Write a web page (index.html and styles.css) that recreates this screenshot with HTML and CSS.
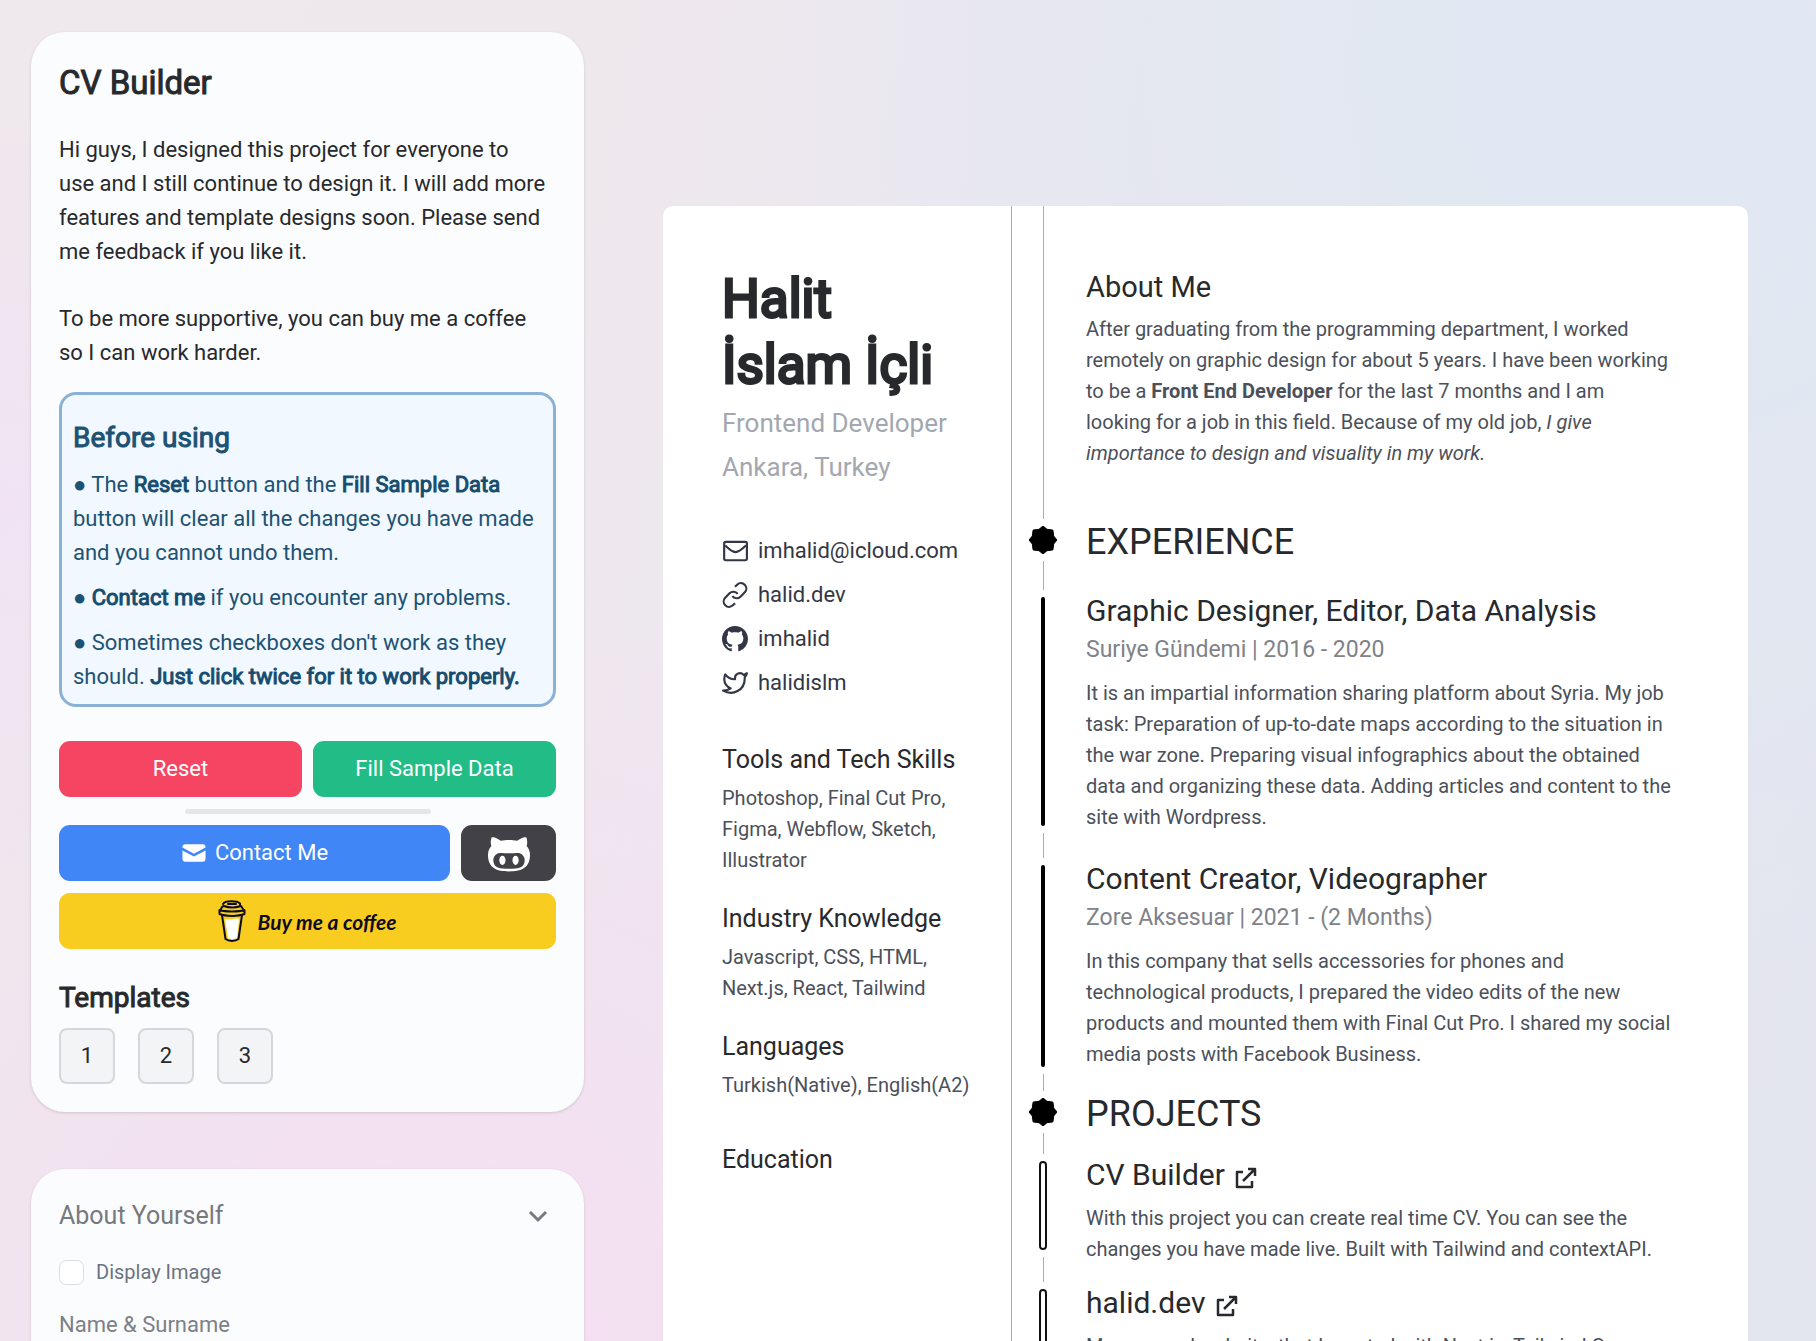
FILE: index.html
```html
<!DOCTYPE html>
<html lang="en">
<head>
<meta charset="utf-8">
<title>CV Builder</title>
<link rel="stylesheet" href="styles.css">
</head>
<body>
<div class="app">
  <aside class="sidebar">
    <section class="panel">
      <h1 class="panel-title">CV Builder</h1>
      <p class="intro">Hi guys, I designed this project for everyone to use and I still continue to design it. I will add more features and template designs soon. Please send me feedback if you like it.</p>
      <p class="intro">To be more supportive, you can buy me a coffee so I can work harder.</p>
      <div class="notice">
        <h2 class="notice-title">Before using</h2>
        <p>● The <b>Reset</b> button and the <b>Fill Sample Data</b> button will clear all the changes you have made and you cannot undo them.</p>
        <p>● <b>Contact me</b> if you encounter any problems.</p>
        <p>● Sometimes checkboxes don't work as they should. <b>Just click twice for it to work properly.</b></p>
      </div>
      <div class="row">
        <button class="btn btn-reset" type="button">Reset</button>
        <button class="btn btn-fill" type="button">Fill Sample Data</button>
      </div>
      <hr class="divider">
      <div class="row">
        <a class="btn btn-contact" href="#contact">
          <svg width="26" height="26" viewBox="0 0 18 18" fill="currentColor"><path d="M1 5a2 2 0 0 1 2-2h12a2 2 0 0 1 2 2v.2L9 9.500 1 5.200z"/><path d="M1 7.300V13a2 2 0 0 0 2 2h12a2 2 0 0 0 2-2V7.300l-8 4.200z"/></svg>
          Contact Me</a>
        <a class="btn btn-github" href="#github" aria-label="GitHub">
          <svg width="42" height="42" viewBox="0 0 16 16" fill="currentColor"><path fill-rule="evenodd" d="M14.7 5.34c.13-.32.55-1.59-.13-3.31 0 0-1.05-.33-3.44 1.3-1-.28-2.07-.32-3.13-.32s-2.13.04-3.13.32c-2.39-1.64-3.44-1.3-3.44-1.3-.68 1.72-.26 2.99-.13 3.31C.49 6.21 0 7.33 0 8.69 0 13.84 3.33 15 7.98 15S16 13.84 16 8.69c0-1.36-.49-2.48-1.3-3.35zM8 14.02c-3.3 0-5.98-.15-5.98-3.35 0-.76.38-1.48 1.02-2.07 1.07-.98 2.9-.46 4.96-.46 2.07 0 3.88-.52 4.96.46.65.59 1.02 1.3 1.02 2.07 0 3.19-2.68 3.35-5.98 3.35zM5.49 9.01c-.66 0-1.2.8-1.2 1.78s.54 1.79 1.2 1.79c.66 0 1.2-.8 1.2-1.79s-.54-1.78-1.2-1.78zm5.02 0c-.66 0-1.2.79-1.2 1.78s.54 1.79 1.2 1.79c.66 0 1.2-.8 1.2-1.79s-.53-1.78-1.2-1.78z"/></svg>
        </a>
      </div>
      <a class="btn btn-coffee" href="#coffee">
        <svg width="28" height="42" viewBox="0 0 28 42" fill="none" stroke="#0d0c22" stroke-width="2" stroke-linejoin="round" stroke-linecap="round"><path d="M7 19l3 19c2 1.500 7 1.500 9 0l2-19c-4-2-9 2-14 0z" fill="#fff" stroke="none"/><path d="M4 15l3.500 24c3 2.500 10 2.500 13 0L24 15"/><path d="M1.500 10c6 2 19 2 25 0v4c-6 2.500-19 2.500-25 0z"/><path d="M3 9c1-3 2-3 3-3 5 2 11 2 17 0l2 3M5 4c2-3.500 14-3.500 17-.5v2.500"/><path d="M10 4h8"/></svg>
        <span>Buy me a coffee</span>
      </a>
      <h2 class="templates-title">Templates</h2>
      <div class="templates">
        <button class="template" type="button">1</button>
        <button class="template" type="button">2</button>
        <button class="template" type="button">3</button>
      </div>
    </section>
    <section class="panel panel-form">
      <button class="accordion" type="button">About Yourself
        <svg width="22" height="22" viewBox="0 0 22 22" fill="none" stroke="currentColor" stroke-width="3"><path d="M3 7l8 8 8-8"/></svg>
      </button>
      <label class="check"><input type="checkbox"> Display Image</label>
      <label class="field">Name &amp; Surname<input type="text"></label>
    </section>
  </aside>

  <main class="stage">
    <article class="cv">
      <div class="cv-side">
        <h1 class="cv-name">Halit<br>İslam İçli</h1>
        <p class="cv-role">Frontend Developer</p>
        <p class="cv-role">Ankara, Turkey</p>
        <ul class="contacts">
          <li><svg class="icon" viewBox="0 0 24 24" fill="none" stroke="currentColor" stroke-width="2" stroke-linejoin="round"><rect x="2" y="3.500" width="21" height="17" rx="1.500"/><path d="M3 7c3 3 6 6 9.500 6S19 10 22 7"/></svg><a href="#mail">imhalid@icloud.com</a></li>
          <li><svg class="icon" viewBox="0 0 24 24" fill="none" stroke="currentColor" stroke-width="2"><path d="M9.500 13a5 5 0 0 0 7.540.540l4-4a5 5 0 0 0-7.070-7.070l-2 2"/><path d="M14.500 11a5 5 0 0 0-7.540-.540l-4 4a5 5 0 0 0 7.070 7.070l2-2"/></svg><a href="#site">halid.dev</a></li>
          <li><svg class="icon" viewBox="0 0 16 16" fill="currentColor"><path d="M8 0C3.580 0 0 3.580 0 8c0 3.540 2.290 6.530 5.470 7.590.4.070.55-.17.55-.38 0-.19-.01-.82-.01-1.490-2.010.37-2.530-.49-2.690-.94-.09-.23-.48-.94-.82-1.130-.28-.15-.68-.52-.01-.53.63-.01 1.080.58 1.230.82.72 1.210 1.870.87 2.330.66.07-.52.28-.87.51-1.070-1.780-.2-3.640-.89-3.640-3.950 0-.87.31-1.590.82-2.150-.08-.2-.36-1.020.08-2.120 0 0 .67-.21 2.200.82.64-.18 1.320-.27 2-.27s1.360.09 2 .27c1.530-1.040 2.200-.82 2.200-.82.44 1.100.16 1.920.08 2.120.51.56.82 1.270.82 2.150 0 3.070-1.870 3.750-3.650 3.950.29.25.54.73.54 1.480 0 1.070-.01 1.930-.01 2.200 0 .21.15.46.55.38A8.010 8.010 0 0 0 16 8c0-4.420-3.580-8-8-8z"/></svg><a href="#gh">imhalid</a></li>
          <li><svg class="icon" viewBox="0 0 24 24" fill="none" stroke="currentColor" stroke-width="2" stroke-linejoin="round"><path d="M23 3a10.900 10.900 0 0 1-3.140 1.530 4.480 4.480 0 0 0-7.860 3v1A10.660 10.660 0 0 1 3 4s-4 9 5 13a11.640 11.640 0 0 1-7 2c9 5 20 0 20-11.500a4.500 4.500 0 0 0-.08-.83A7.720 7.720 0 0 0 23 3z"/></svg><a href="#tw">halidislm</a></li>
        </ul>
        <section class="skill"><h2>Tools and Tech Skills</h2><p>Photoshop, Final Cut Pro, Figma, Webflow, Sketch, Illustrator</p></section>
        <section class="skill"><h2>Industry Knowledge</h2><p>Javascript, CSS, HTML, Next.js, React, Tailwind</p></section>
        <section class="skill"><h2>Languages</h2><p>Turkish(Native), English(A2)</p></section>
        <section class="skill skill-last"><h2>Education</h2></section>
      </div>

      <div class="cv-main">
        <section class="entry">
          <div class="rail"><i class="line"></i></div>
          <div class="about">
            <h2 class="entry-about">About Me</h2>
            <p class="copy">After graduating from the programming department, I worked remotely on graphic design for about 5 years. I have been working to be a <b>Front End Developer</b> for the last 7 months and I am looking for a job in this field. Because of my old job, <i>I give importance to design and visuality in my work.</i></p>
          </div>
        </section>
        <div class="entry entry-heading">
          <div class="rail"><svg class="badge" viewBox="0 0 28 28"><path d="M14 0l4 3.300 5.900.800.800 5.900L28 14l-3.300 4-.800 5.900-5.900.800L14 28l-4-3.300-5.900-.800-.800-5.900L0 14l3.300-4 .800-5.900 5.900-.800z" stroke="#000" stroke-linejoin="round"/></svg><i class="line"></i></div>
          <h2 class="heading">EXPERIENCE</h2>
        </div>
        <section class="entry">
          <div class="rail"><i class="bar"></i><i class="line line-gap"></i></div>
          <div class="job">
            <h3 class="job-title">Graphic Designer, Editor, Data Analysis</h3>
            <p class="job-meta">Suriye Gündemi | 2016 - 2020</p>
            <p class="copy">It is an impartial information sharing platform about Syria. My job task: Preparation of up-to-date maps according to the situation in the war zone. Preparing visual infographics about the obtained data and organizing these data. Adding articles and content to the site with Wordpress.</p>
          </div>
        </section>
        <section class="entry">
          <div class="rail"><i class="bar"></i><i class="line line-short"></i></div>
          <div class="job job-last">
            <h3 class="job-title">Content Creator, Videographer</h3>
            <p class="job-meta">Zore Aksesuar | 2021 - (2 Months)</p>
            <p class="copy">In this company that sells accessories for phones and technological products, I prepared the video edits of the new products and mounted them with Final Cut Pro. I shared my social media posts with Facebook Business.</p>
          </div>
        </section>
        <div class="entry entry-projects">
          <div class="rail"><svg class="badge" viewBox="0 0 28 28"><path d="M14 0l4 3.300 5.900.800.800 5.900L28 14l-3.300 4-.800 5.900-5.900.800L14 28l-4-3.300-5.900-.800-.800-5.900L0 14l3.300-4 .800-5.900 5.900-.800z" stroke="#000" stroke-linejoin="round"/></svg><i class="line"></i></div>
          <h2 class="heading">PROJECTS</h2>
        </div>
        <section class="entry">
          <div class="rail"><i class="bar bar-open"></i><i class="line line-gap"></i></div>
          <div class="project">
            <h3 class="job-title"><a href="#cvb">CV Builder <svg class="ext" viewBox="0 0 22 22" fill="none" stroke="currentColor" stroke-width="2.500" stroke-linejoin="round"><path d="M8 5H2v15h15v-6M13 2h7v7M20 2L8 14"/></svg></a></h3>
            <p class="copy">With this project you can create real time CV. You can see the changes you have made live. Built with Tailwind and contextAPI.</p>
          </div>
        </section>
        <section class="entry">
          <div class="rail"><i class="bar bar-open"></i><i class="line line-gap"></i></div>
          <div class="project">
            <h3 class="job-title"><a href="#hd">halid.dev <svg class="ext" viewBox="0 0 22 22" fill="none" stroke="currentColor" stroke-width="2.500" stroke-linejoin="round"><path d="M8 5H2v15h15v-6M13 2h7v7M20 2L8 14"/></svg></a></h3>
            <p class="copy">My personal website, that I created with Next.js, Tailwind Css</p>
          </div>
        </section>
      </div>
    </article>
  </main>
</div>
</body>
</html>
```
FILE: styles.css
```css
* { box-sizing: border-box; }
body, h1, h2, h3, p, ul, hr { margin: 0; padding: 0; }
body {
  font-family: Roboto, "Liberation Sans", sans-serif;
  font-size: 22px;
  line-height: 34px;
  color: #27292c;
  background:
    radial-gradient(circle at 24% 100%, #f5def2 0%, rgba(245, 222, 242, 0) 42%),
    radial-gradient(circle at 0% 38%, #f1e3f4 0%, rgba(241, 227, 244, 0) 20%),
    radial-gradient(circle at 92% 5%, #dfe8f3 0%, rgba(223, 232, 243, 0) 45%),
    linear-gradient(100deg, #efe8ec 0%, #eee8ee 35%, #e3e5ef 100%);
}
h1, h2, h3 { font-weight: 400; }
a { color: inherit; text-decoration: none; }
button, input { font: inherit; color: inherit; }
svg { flex: none; }
b { font-weight: 400; -webkit-text-stroke: 1px currentColor; }

.app { display: flex; height: 100vh; overflow: hidden; }
.sidebar { flex: 0 0 584px; padding: 32px 0 0 31px; display: flex; flex-direction: column; gap: 57px; }
.stage { flex: 1; min-width: 0; padding: 206px 68px 0 79px; }

.panel {
  flex: none;
  padding: 28px;
  border-radius: 34px;
  background: #fbfcfe;
  box-shadow: 0 1px 3px rgba(0, 0, 0, .14);
}
.panel-title { font-size: 33px; line-height: 45px; -webkit-text-stroke: 1px currentColor; margin-bottom: 28px; }
.intro { margin-bottom: 33px; padding-right: 10px; }
.notice {
  margin-top: -11px;
  padding: 26px 11px 10px;
  border: 3px solid #8ab2d6;
  border-radius: 17px;
  background: #f1f8ff;
  color: #1e5273;
}
.notice b { color: #164c6e; }
.notice-title { font-size: 28px; line-height: 34px; margin-bottom: 13px; -webkit-text-stroke: 1px currentColor; }
.notice p + p { margin-top: 11px; }

.row { display: flex; gap: 11px; }
.btn {
  display: flex; align-items: center; justify-content: center; gap: 8px;
  flex: 1;
  height: 56px;
  padding: 0;
  border: 0;
  border-radius: 11px;
  color: #fff;
}
.notice + .row { margin-top: 34px; }
.btn-reset { background: #f54562; }
.btn-fill { background: #22bc86; }
.divider { width: 246px; height: 5px; margin: 12px auto 11px; border: 0; border-radius: 3px; background: #e5e6e8; }
.btn-contact { background: #4086f7; }
.btn-github { flex: 0 0 95px; background: #424147; }
.btn-coffee { margin-top: 12px; gap: 11px; background: #f8cd20; color: #0d0c22; font: italic 700 21px Lato, sans-serif; }
.templates-title { margin-top: 32px; font-size: 28px; line-height: 34px; -webkit-text-stroke: 1px currentColor; }
.templates { display: flex; gap: 23px; margin-top: 13px; }
.template { width: 56px; height: 56px; padding: 0; border: 2px solid #d6d7da; border-radius: 8px; background: #f3f4f6; }

.accordion {
  display: flex; justify-content: space-between; align-items: center;
  width: 100%; padding: 0 7px 0 0; border: 0; background: none;
  font-size: 25px; line-height: 38px; color: #77797c;
}
.check { display: flex; align-items: center; gap: 12px; margin-top: 20px; font-size: 20px; color: #6b7280; }
.check input { appearance: none; width: 25px; height: 25px; margin: 0; border: 1px solid #dcdee2; border-radius: 7px; background: #fff; }
.field { display: flex; flex-direction: column; margin-top: 19px; color: #7b8087; }
.field input { height: 50px; border: 1px solid #dcdee2; border-radius: 8px; background: #fff; }

.cv { display: flex; border-radius: 10px 10px 0 0; background: #fff; min-height: 1400px; }
.cv-side { flex: 0 0 349px; padding: 60px 30px 0 59px; border-right: 1px solid #a9a9ab; }
.cv-name { margin-bottom: 3px; font-size: 53px; line-height: 66px; -webkit-text-stroke: 3px currentColor; }
.cv-role { font-size: 26px; line-height: 44px; color: #a3a7af; }
.contacts { list-style: none; margin: 40px 0 34px; }
.contacts li { display: flex; align-items: center; gap: 10px; line-height: 44px; color: #333745; }
.icon { width: 26px; height: 26px; }
.skill { margin-bottom: 22px; }
.skill h2 { margin-bottom: 2px; font-size: 25px; line-height: 42px; }
.skill p, .copy { font-size: 20px; line-height: 31px; color: #4b505a; }
.skill-last { margin-top: 38px; }

.cv-main { flex: 1; min-width: 0; padding: 0 70px 0 17px; }
.entry { display: grid; grid-template-columns: 28px minmax(0, 1fr); column-gap: 29px; }
.rail { display: flex; flex-direction: column; align-items: center; gap: 7px; padding-bottom: 7px; }
.line { flex: 1; width: 1px; background: #adadb0; }
.line-gap { flex: 0 0 25px; }
.line-short { flex: 0 0 17px; }
.bar { flex: 1; width: 4px; border-radius: 2px; background: #000; }
.bar-open { width: 8px; border: 2px solid #111; border-radius: 4px; background: #fff; }
.badge { width: 28px; height: 28px; }
.about { padding: 64px 9px 57px 0; }
.about b { font-weight: 700; -webkit-text-stroke: 0; }
.entry-about { font-size: 29px; line-height: 34px; margin-bottom: 10px; }
.heading { font-size: 36px; line-height: 32px; }
.entry-heading { min-height: 71px; }
.entry-projects { min-height: 63px; }
.job { padding-bottom: 32px; }
.job-last { padding-bottom: 28px; }
.job-title { font-size: 30px; line-height: 28px; }
.job-meta { margin: 8px 0 11px; font-size: 23px; color: #7f8288; }
.project .copy { margin-top: 14px; }
.project { padding-bottom: 24px; }
.ext { width: 22px; height: 22px; margin-left: 3px; vertical-align: -4px; }
```
